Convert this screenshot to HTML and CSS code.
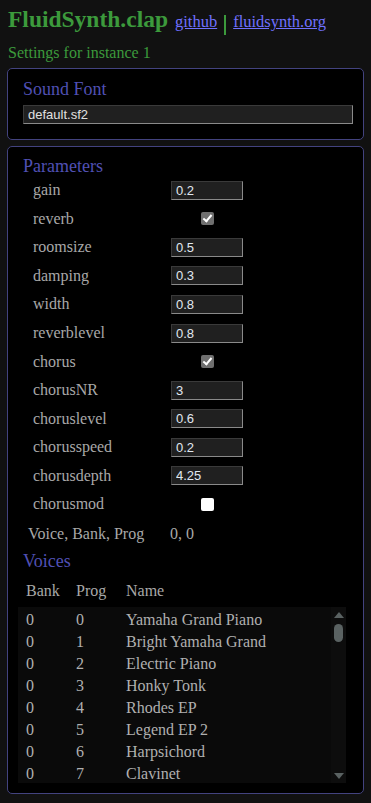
FILE: index.html
```html
<!DOCTYPE html>
<html lang="en">
  <head>
    <meta charset="UTF-8">
    <title>FluidSynth.clap</title>
    <link rel="stylesheet" href="styles.css">
  </head>
  <body>
    <header class="top">
      <h1 class="title">FluidSynth.clap</h1>
      <a href="#">github</a>
      <span class="sep"></span>
      <a href="#">fluidsynth.org</a>
    </header>
    <p class="instance">Settings for instance 1</p>

    <section class="panel panel-font">
      <h2>Sound Font</h2>
      <input class="font-input" type="text" value="default.sf2">
    </section>

    <section class="panel panel-params">
      <h2>Parameters</h2>
      <div class="params">
        <label>gain</label><input class="num" type="text" value="0.2">
        <label>reverb</label><span class="cb-cell"><input class="cb" type="checkbox" checked></span>
        <label>roomsize</label><input class="num" type="text" value="0.5">
        <label>damping</label><input class="num" type="text" value="0.3">
        <label>width</label><input class="num" type="text" value="0.8">
        <label>reverblevel</label><input class="num" type="text" value="0.8">
        <label>chorus</label><span class="cb-cell"><input class="cb" type="checkbox" checked></span>
        <label>chorusNR</label><input class="num" type="text" value="3">
        <label>choruslevel</label><input class="num" type="text" value="0.6">
        <label>chorusspeed</label><input class="num" type="text" value="0.2">
        <label>chorusdepth</label><input class="num" type="text" value="4.25">
        <label>chorusmod</label><span class="cb-cell"><input class="cb" type="checkbox"></span>
      </div>
      <div class="vbp">
        <span>Voice, Bank, Prog</span>
        <span>0, 0</span>
      </div>

      <h2 class="voices-title">Voices</h2>
      <div class="vrow vhead"><span>Bank</span><span>Prog</span><span>Name</span></div>
      <div class="vbox">
        <div class="vlist">
          <div class="vrow"><span>0</span><span>0</span><span>Yamaha Grand Piano</span></div>
          <div class="vrow"><span>0</span><span>1</span><span>Bright Yamaha Grand</span></div>
          <div class="vrow"><span>0</span><span>2</span><span>Electric Piano</span></div>
          <div class="vrow"><span>0</span><span>3</span><span>Honky Tonk</span></div>
          <div class="vrow"><span>0</span><span>4</span><span>Rhodes EP</span></div>
          <div class="vrow"><span>0</span><span>5</span><span>Legend EP 2</span></div>
          <div class="vrow"><span>0</span><span>6</span><span>Harpsichord</span></div>
          <div class="vrow"><span>0</span><span>7</span><span>Clavinet</span></div>
        </div>
        <div class="vscroll">
          <span class="arrow up"></span>
          <span class="thumb"></span>
          <span class="arrow down"></span>
        </div>
      </div>
    </section>
  </body>
</html>
```

FILE: styles.css
```css
body {
  margin: 0;
  padding: 0 7px 0 7px;
  background-color: #111111;
  font-family: "Liberation Serif", "Times New Roman", serif;
  color: #a8a8a8;
  font-size: 16px;
}
.top {
  display: flex;
  align-items: baseline;
  padding: 6px 0 0 1px;
  height: 32px;
}
.title {
  margin: 0 7px 0 0;
  font-size: 23.5px;
  font-weight: bold;
  color: #3c9a3c;
}
.top a {
  color: #7070ff;
  font-size: 16.5px;
}
.sep {
  display: inline-block;
  width: 2px;
  height: 20px;
  margin: 0 7px;
  background: #3c9a3c;
  align-self: center;
  position: relative;
  top: 3px;
}
.instance {
  margin: 6px 0 6px 1px;
  font-size: 16px;
  color: #3c9a3c;
}
.panel {
  background: #000;
  border: 1px solid #43437f;
  border-radius: 5px;
  padding: 0 4px 0 15px;
  margin-bottom: 6px;
}
.panel h2 {
  margin: 0;
  font-size: 18px;
  font-weight: normal;
  color: #5050b4;
}
.panel-font {
  padding-top: 10px;
  padding-bottom: 15px;
}
.panel-font h2 {
  height: 26px;
}
.font-input {
  display: block;
  box-sizing: border-box;
  width: 330px;
  height: 19px;
  margin: 0;
  padding: 0 4px;
  background: #202020;
  color: #e0e0e0;
  border: 1px solid #8a8a8a;
  border-top-color: #3a3a3a;
  border-left-color: #3a3a3a;
  font-family: "Liberation Sans", Arial, sans-serif;
  font-size: 13px;
}
.panel-params {
  padding-top: 9px;
  padding-bottom: 10px;
}
.params {
  display: grid;
  grid-template-columns: 138px 72px;
  grid-auto-rows: 28.55px;
  align-items: center;
  padding-left: 10px;
  margin-top: -1px;
}
.params label {
  line-height: 18px;
}
.num {
  box-sizing: border-box;
  width: 72px;
  height: 19px;
  margin: 0;
  padding: 0 4px;
  background: #202020;
  color: #e0e8f0;
  border: 1px solid #8a8a8a;
  border-top-color: #3a3a3a;
  border-left-color: #3a3a3a;
  font-family: "Liberation Sans", Arial, sans-serif;
  font-size: 13px;
}
.cb-cell {
  display: flex;
  justify-content: center;
}
.cb {
  appearance: none;
  -webkit-appearance: none;
  position: relative;
  width: 13px;
  height: 13px;
  margin: 0 0 0 1px;
  border-radius: 2px;
  background: #ffffff;
}
.cb:checked {
  background: #6f6f6f;
}
.cb:checked::after {
  content: '';
  position: absolute;
  left: 4px;
  top: 1px;
  width: 3px;
  height: 7px;
  border: solid #ffffff;
  border-width: 0 2px 2px 0;
  transform: rotate(40deg);
}
.vbp {
  display: grid;
  grid-template-columns: 142px auto;
  padding-left: 5px;
  height: 26px;
  align-items: center;
  margin-top: 2px;
}
.voices-title {
  margin-top: 4px !important;
  height: 26px;
}
.vrow {
  display: grid;
  grid-template-columns: 50px 50px 1fr;
  padding-left: 8px;
  height: 22px;
  line-height: 22px;
  white-space: nowrap;
}
.vhead {
  height: 30px;
  line-height: 28px;
  padding-left: 3px;
}
.vbox {
  display: flex;
  width: 328px;
  height: 176px;
  margin-left: -5px;
  background: #0a0a0a;
}
.vlist {
  flex: 1;
  overflow: hidden;
  padding-top: 2px;
  color: #b0b0b0;
}
.vscroll {
  width: 15px;
  display: flex;
  flex-direction: column;
  align-items: center;
  background: #0d0d0d;
}
.arrow {
  width: 0;
  height: 0;
  border-left: 5px solid transparent;
  border-right: 5px solid transparent;
}
.arrow.up {
  margin-top: 5px;
  border-bottom: 6px solid #5a6262;
}
.arrow.down {
  margin-top: auto;
  margin-bottom: 4px;
  border-top: 6px solid #5a6262;
}
.thumb {
  width: 9px;
  height: 18px;
  margin-top: 6px;
  border-radius: 5px;
  background: #5a6262;
}
```
